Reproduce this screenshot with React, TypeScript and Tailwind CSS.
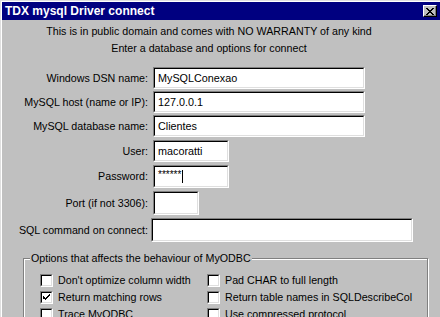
import { ReactNode } from "react";

const font = { fontFamily: '"Liberation Sans", Arial, sans-serif' };

function Sunken({ className, children }: { className: string; children?: ReactNode }) {
    return (
        <div className={`border border-t-[#808080] border-l-[#808080] border-b-white border-r-white ${className}`}>
            <div className="h-full w-full border border-t-black border-l-black border-b-[#dfdfdf] border-r-[#dfdfdf] bg-white flex items-center pl-[3px] text-[10.8px] leading-none">
                {children}
            </div>
        </div>
    );
}

function FieldRow({
    label,
    className,
    children,
}: {
    label: string;
    className: string;
    children: ReactNode;
}) {
    return (
        <div className={`flex items-center ${className}`}>
            <div className="w-[148px] text-right text-[10.7px] leading-none whitespace-nowrap">{label}</div>
            {children}
        </div>
    );
}

function Check({ label, checked }: { label: string; checked?: boolean }) {
    return (
        <div className="flex items-center h-[17px]">
            <div className="w-[13px] h-[13px] border border-t-[#808080] border-l-[#808080] border-b-white border-r-white">
                <div className="w-full h-full border border-t-black border-l-black border-b-[#dfdfdf] border-r-[#dfdfdf] bg-white flex items-center justify-center">
                    {checked && (
                        <svg width="7" height="7" viewBox="0 0 7 7" shapeRendering="crispEdges">
                            <path d="M0 2h1v3h1v1h1v-1h1v-1h1v-1h1v-1h1v-2h-1v1h-1v1h-1v1h-1v1h-1v-1h-1v-1h-1z" fill="#000" />
                            <path d="M0 2h1v3h-1zM2 4h1v1h-1z" fill="#000" />
                        </svg>
                    )}
                </div>
            </div>
            <span className="ml-[5px] text-[10.7px] leading-none whitespace-nowrap">{label}</span>
        </div>
    );
}

export default function App() {
    return (
        <div
            className="w-[440px] h-[317px] overflow-hidden bg-[#c0c0c0] text-black shadow-[inset_1px_1px_0_#dfdfdf,inset_2px_2px_0_#fff]"
            style={font}
        >
            <div className="ml-[2px] pt-[2px]">
                <div className="h-[18px] bg-[#000080] flex items-center justify-between pl-[3px] pr-[3px]">
                    <span className="text-white text-[12px] font-bold leading-none">TDX mysql Driver connect</span>
                    <div className="w-[14px] h-[12px] bg-[#c0c0c0] border border-t-white border-l-white border-b-black border-r-black shadow-[inset_-1px_-1px_0_#808080] flex items-center justify-center">
                        <svg width="8" height="7" viewBox="0 0 8 7" shapeRendering="crispEdges">
                            <path d="M0 0h2v1h1v1h2v-1h1v-1h2v1h-1v1h-1v1h-1v1h1v1h1v1h1v1h-2v-1h-1v-1h-2v1h-1v1h-2v-1h1v-1h1v-1h1v-1h-1v-1h-1v-1h-1z" fill="#000" />
                        </svg>
                    </div>
                </div>
            </div>

            <div className="w-[418px] mt-[3px] text-center text-[10.7px] leading-[17px]">
                This is in public domain and comes with NO WARRANTY of any kind
            </div>
            <div className="w-[418px] text-center text-[10.7px] leading-[17px]">
                Enter a database and options for connect
            </div>

            <FieldRow label="Windows DSN name:" className="mt-[10px] h-[22px]">
                <Sunken className="ml-[5px] w-[212px] h-[22px]">MySQLConexao</Sunken>
            </FieldRow>
            <FieldRow label="MySQL host (name or IP):" className="mt-[2px] h-[22px]">
                <Sunken className="ml-[5px] w-[212px] h-[22px]">127.0.0.1</Sunken>
            </FieldRow>
            <FieldRow label="MySQL database name:" className="mt-[2px] h-[22px]">
                <Sunken className="ml-[5px] w-[212px] h-[22px]">Clientes</Sunken>
            </FieldRow>
            <FieldRow label="User:" className="mt-[3px] h-[22px]">
                <Sunken className="ml-[5px] w-[76px] h-[22px]">macoratti</Sunken>
            </FieldRow>
            <FieldRow label="Password:" className="mt-[3px] h-[23px]">
                <Sunken className="ml-[5px] w-[76px] h-[23px]">
                    <span className="text-[10px] mt-[-3px]">******</span>
                    <span className="ml-[1px] w-px h-[13px] bg-black" />
                </Sunken>
            </FieldRow>
            <FieldRow label="Port (if not 3306):" className="mt-[3px] h-[24px]">
                <Sunken className="ml-[5px] w-[46px] h-[24px]" />
            </FieldRow>
            <FieldRow label="SQL command on connect:" className="mt-[3px] h-[24px]">
                <Sunken className="ml-[3px] w-[262px] h-[24px]" />
            </FieldRow>

            <div className="relative ml-[23px] mt-[16px] w-[405px] h-[80px] border border-[#808080] shadow-[inset_1px_1px_0_#fff,1px_1px_0_#fff]">
                <span className="absolute left-[6px] top-[-8px] px-[1px] bg-[#c0c0c0] text-[10.7px] leading-[14px] whitespace-nowrap">
                    Options that affects the behaviour of MyODBC
                </span>
                <div className="flex pt-[13px] pl-[16px]">
                    <div className="w-[167px] flex flex-col">
                        <Check label="Don't optimize column width" />
                        <Check label="Return matching rows" checked />
                        <Check label="Trace MyODBC" />
                    </div>
                    <div className="flex flex-col">
                        <Check label="Pad CHAR to full length" />
                        <Check label="Return table names in SQLDescribeCol" />
                        <Check label="Use compressed protocol" />
                    </div>
                </div>
            </div>
        </div>
    );
}
